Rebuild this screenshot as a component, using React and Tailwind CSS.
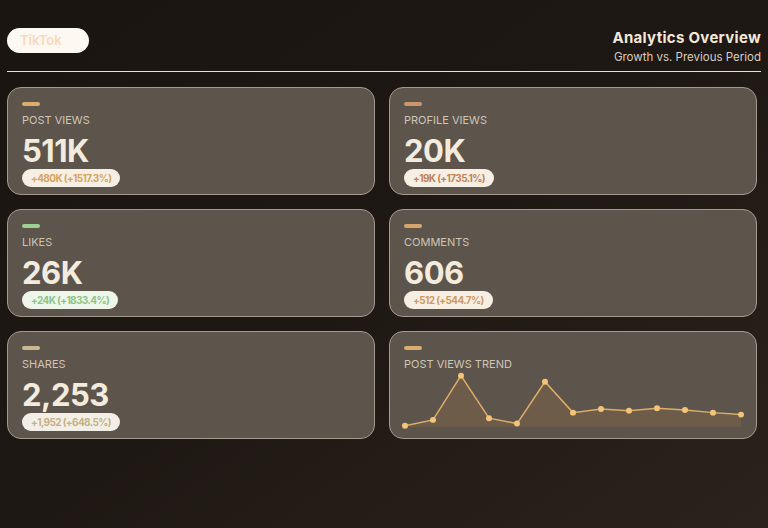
import React from 'react';

const stats = [
  { label: 'Post Views', value: '511K', delta: '+480K (+1517.3%)', bar: 'bg-[#d9ad6c]', badge: 'bg-[#f7efe4] text-[#d6a45e]' },
  { label: 'Profile Views', value: '20K', delta: '+19K (+1735.1%)', bar: 'bg-[#c9966e]', badge: 'bg-[#f7efe4] text-[#c2825a]' },
  { label: 'Likes', value: '26K', delta: '+24K (+1833.4%)', bar: 'bg-[#9ccf94]', badge: 'bg-[#eef6ea] text-[#8cc587]' },
  { label: 'Comments', value: '606', delta: '+512 (+544.7%)', bar: 'bg-[#d6a46c]', badge: 'bg-[#f7efe4] text-[#d09a62]' },
  { label: 'Shares', value: '2,253', delta: '+1,952 (+648.5%)', bar: 'bg-[#cab893]', badge: 'bg-[#f4efe6] text-[#c4b08a]' },
];

// trend points, y in svg coords (0 top, 54 baseline)
const trend = [53, 47, 2.5, 45.3, 50.7, 8.7, 39.7, 36, 37.7, 35.3, 37, 39.7, 41.7];

const Card = ({ children }) => (
  <div className="h-[108px] rounded-[14px] border border-[#a39a8e] bg-[#5d554c] px-[14px] pt-[14px]">
    {children}
  </div>
);

const StatCard = ({ stat }) => (
  <Card>
    <div className={`h-[4px] w-[18px] rounded-full ${stat.bar}`} />
    <div className="mt-[7px] text-[11px] leading-[14px] uppercase text-[#cfc4b5]">{stat.label}</div>
    <div className="mt-[6px] text-[31px] leading-[36px] font-bold text-[#f3ebdd] tracking-[-0.5px]">{stat.value}</div>
    <div className={`flex w-fit h-[18px] items-center rounded-full px-[9px] text-[10px] leading-[12px] font-bold tracking-[-0.6px] ${stat.badge}`}>
      {stat.delta}
    </div>
  </Card>
);

const TrendCard = () => {
  const w = 338;
  const step = w / (trend.length - 1);
  const pts = trend.map((y, i) => [i * step, y]);
  const line = pts.map(([x, y]) => `${x.toFixed(1)},${y}`).join(' ');
  const area = `0,54 ${line} ${w},54`;
  return (
    <Card>
      <div className="h-[4px] w-[18px] rounded-full bg-[#d9ad6c]" />
      <div className="mt-[7px] text-[11px] leading-[14px] uppercase text-[#cfc4b5]">Post Views Trend</div>
      <svg width={w} height="58" viewBox="-1 -2 340 58" className="overflow-visible">
        <polygon points={area} fill="#6d5c4a" />
        <polyline points={line} fill="none" stroke="#deae68" strokeWidth="1.5" />
        {pts.map(([x, y], i) => (
          <circle key={i} cx={x} cy={y} r="3" fill="#f2c57a" />
        ))}
      </svg>
    </Card>
  );
};

export default function App() {
  return (
    <div
      className="w-[768px] h-[528px] overflow-hidden bg-gradient-to-br from-[#1b1511] via-[#1e1814] to-[#2b221b] px-[7px] pt-[28px]"
      style={{ fontFamily: 'Inter, "Noto Sans", sans-serif' }}
    >
      <div className="w-[754px] flex items-start justify-between border-b border-[#e9dfd2] pb-[6px]">
        <div className="flex h-[25px] w-[82px] items-center rounded-full bg-[#fdf8f2] pl-[13px] text-[13px] font-semibold text-[#fbd8ba]">
          TikTok
        </div>
        <div className="text-right">
          <div className="text-[15px] leading-[20px] font-bold tracking-[0.3px] text-[#f3e7d7]">Analytics Overview</div>
          <div className="mt-[1px] text-[11.5px] leading-[16px] text-[#d9cebf]">Growth vs. Previous Period</div>
        </div>
      </div>

      <div className="mt-[15px] grid w-[750px] grid-cols-2 gap-[14px]">
        {stats.map((s) => (
          <StatCard key={s.label} stat={s} />
        ))}
        <TrendCard />
      </div>
    </div>
  );
}
